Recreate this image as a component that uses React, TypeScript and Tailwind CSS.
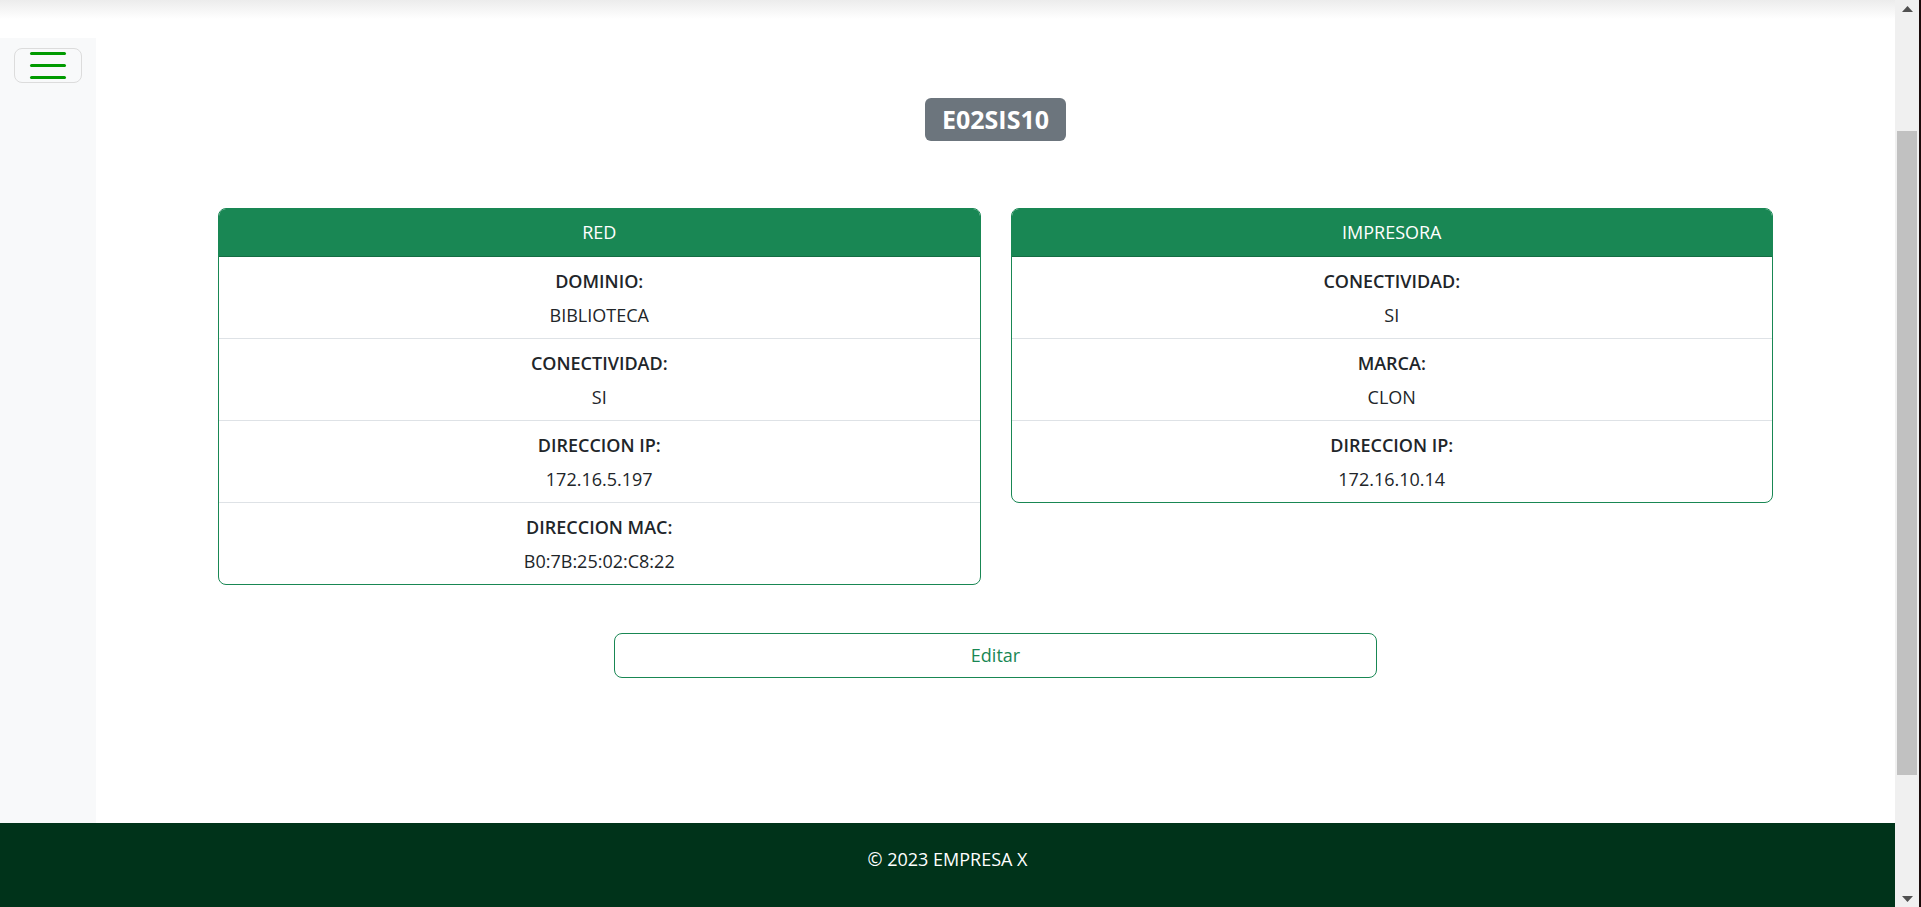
import React from "react";

type Item = { label: string; value: string };

const red: Item[] = [
    { label: "DOMINIO:", value: "BIBLIOTECA" },
    { label: "CONECTIVIDAD:", value: "SI" },
    { label: "DIRECCION IP:", value: "172.16.5.197" },
    { label: "DIRECCION MAC:", value: "B0:7B:25:02:C8:22" }
];

const impresora: Item[] = [
    { label: "CONECTIVIDAD:", value: "SI" },
    { label: "MARCA:", value: "CLON" },
    { label: "DIRECCION IP:", value: "172.16.10.14" }
];

const InfoCard: React.FC<{ title: string; items: Item[] }> = ({ title, items }) => (
    <div className="flex-1 border border-[#198754] rounded-[8px] overflow-hidden bg-white">
        <div className="h-[48px] bg-[#198754] border-b border-[#146c43] flex items-center justify-center text-white text-[18px]">
            {title}
        </div>
        {items.map((it, i) => (
            <div
                key={it.label}
                className={`pt-[9px] pb-[8px] text-center text-[#212529] ${i > 0 ? "border-t border-[#dee2e6]" : ""}`}
            >
                <div className="leading-[30px] text-[18px] font-semibold">{it.label}</div>
                <div className="leading-[30px] text-[18px] mt-[4px]">{it.value}</div>
            </div>
        ))}
    </div>
);

const App: React.FC = () => {
    return (
        <div className="h-[907px] w-[1921px] flex overflow-hidden font-['Open_Sans',sans-serif]">
            <div className="flex-1 flex flex-col bg-white">
                {/* top strip with the navbar shadow */}
                <div className="h-[38px] bg-gradient-to-b from-[#ececec] via-white to-white" />
                <div className="flex flex-1">
                    <aside className="w-[96px] bg-[#f8f9fa] pt-[10px] pl-[14px]">
                        <button className="w-[68px] h-[35px] border border-[#dcdcdc] rounded-[8px] flex flex-col items-center justify-center gap-[9px]">
                            <span className="block w-[36px] h-[3px] bg-[#009a00] rounded-full" />
                            <span className="block w-[36px] h-[3px] bg-[#009a00] rounded-full" />
                            <span className="block w-[36px] h-[3px] bg-[#009a00] rounded-full" />
                        </button>
                    </aside>
                    <main className="flex-1 flex flex-col items-center pt-[60px]">
                        <span className="h-[43px] px-[17px] flex items-center bg-[#6c757d] text-white text-[25px] font-bold rounded-[6px]">
                            E02SIS10
                        </span>
                        <div className="w-[1555px] flex items-start gap-[30px] mt-[67px]">
                            <InfoCard title="RED" items={red} />
                            <InfoCard title="IMPRESORA" items={impresora} />
                        </div>
                        <button className="mt-[48px] w-[763px] h-[45px] border border-[#198754] rounded-[8px] text-[#198754] text-[18px]">
                            Editar
                        </button>
                    </main>
                </div>
                <footer className="h-[84px] bg-[#00331a] flex items-center justify-center pb-[12px] text-white text-[18px]">
                    © 2023 EMPRESA X
                </footer>
            </div>
            {/* window scrollbar */}
            <div className="w-[24px] bg-[#f0f0f0] flex flex-col items-center">
                <div className="h-[17px] flex items-center justify-center">
                    <svg width="11" height="6" viewBox="0 0 11 6"><path d="M0 6 L5.5 0 L11 6 Z" fill="#505050" /></svg>
                </div>
                <div className="mt-[114px] w-[20px] h-[644px] bg-[#c1c1c1]" />
                <div className="flex-1" />
                <div className="h-[17px] flex items-center justify-center">
                    <svg width="11" height="6" viewBox="0 0 11 6"><path d="M0 0 L5.5 6 L11 0 Z" fill="#505050" /></svg>
                </div>
            </div>
            <div className="w-[2px] bg-[#1a0a0a]" />
        </div>
    );
};

export default App;
